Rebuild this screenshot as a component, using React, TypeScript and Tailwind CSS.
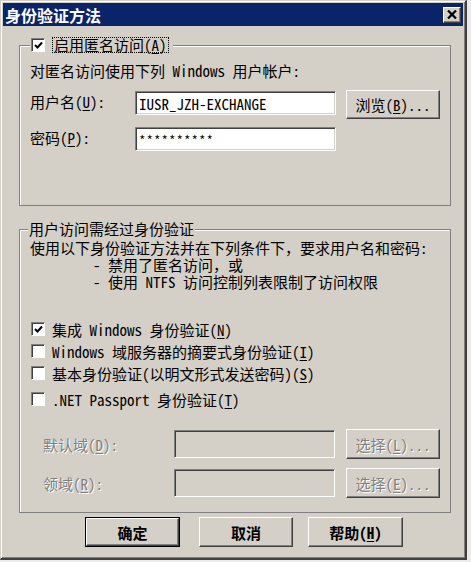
import React from "react";

const FONT = "font-['Noto_Sans_Mono_CJK_SC','Liberation_Mono','Noto_Sans_CJK_SC',monospace]";

function K({ c }: { c: string }) {
  return (
    <>
      (<span className="underline underline-offset-2">{c}</span>)
    </>
  );
}

function Check({ checked }: { checked?: boolean }) {
  return (
    <span className="w-[14px] h-[14px] shrink-0 bg-white border-t border-l border-r border-b border-t-[#808080] border-l-[#808080] border-r-white border-b-white shadow-[inset_1px_1px_0_#404040] flex items-center justify-center">
      {checked && (
        <svg width="9" height="9" viewBox="0 0 9 9">
          <path d="M1 4 L3.5 6.5 L8 1.5" stroke="#000" strokeWidth="2" fill="none" />
        </svg>
      )}
    </span>
  );
}

function Btn({
  children,
  w = "w-[94px]",
  h = "h-[29px]",
  disabled,
  extra = "",
}: {
  children: React.ReactNode;
  w?: string;
  h?: string;
  disabled?: boolean;
  extra?: string;
}) {
  return (
    <div
      className={`${w} ${h} shrink-0 flex items-center justify-center bg-[#d4d0c8] border-t border-l border-r border-b border-t-white border-l-white border-r-[#404040] border-b-[#404040] shadow-[inset_-1px_-1px_0_#808080] leading-[17px] ${
        disabled ? "text-[#808080] [text-shadow:1px_1px_0_#fff]" : "text-black"
      } ${extra}`}
    >
      {children}
    </div>
  );
}

function Input({
  children,
  w,
  h,
  disabled,
}: {
  children?: React.ReactNode;
  w: string;
  h: string;
  disabled?: boolean;
}) {
  return (
    <div
      className={`${w} ${h} shrink-0 flex items-center pl-[3px] border-t border-l border-r border-b border-t-[#808080] border-l-[#808080] border-r-white border-b-white shadow-[inset_1px_1px_0_#404040,inset_-1px_-1px_0_#d4d0c8] ${
        disabled ? "bg-[#d4d0c8]" : "bg-white"
      }`}
    >
      {children}
    </div>
  );
}

export default function App() {
  return (
    <div className={`w-[471px] h-[562px] bg-[#ecebe8] ${FONT} text-[15px] text-black`}>
      <div className="w-[467px] h-[560px] bg-[#d4d0c8] border-l border-t border-l-[#d4d0c8] border-t-[#d4d0c8] border-r-2 border-b-2 border-r-[#404040] border-b-[#404040] shadow-[inset_1px_1px_0_#fff,inset_-1px_-1px_0_#808080] p-[2px] flex flex-col">
        {/* title bar */}
        <div className="h-[23px] bg-[#0a246a] flex items-center justify-between pl-[2px] pr-[2px]">
          <span className="text-white font-bold text-[16px] leading-[20px] font-['Noto_Sans_CJK_SC',sans-serif]">
            身份验证方法
          </span>
          <div className="w-[18px] h-[16px] bg-[#d4d0c8] border-t border-l border-r border-b border-t-white border-l-white border-r-[#404040] border-b-[#404040] shadow-[inset_-1px_-1px_0_#808080] flex items-center justify-center">
            <svg width="10" height="9" viewBox="0 0 10 9">
              <path d="M1 0.5 L9 8.5 M9 0.5 L1 8.5" stroke="#000" strokeWidth="2.2" />
            </svg>
          </div>
        </div>

        {/* group 1 */}
        <fieldset className="mt-[11px] ml-[16px] w-[429px] border border-[#808080] shadow-[inset_1px_1px_0_#fff] px-[10px] pb-[54px] m-0">
          <legend className="h-[16px] flex items-center gap-[7px] pl-[1px] pr-[4px] bg-[#d4d0c8]">
            <Check checked />
            <span className="border border-dotted border-black leading-[14px] px-[1px]">
              启用匿名访问<K c="A" />
            </span>
          </legend>
          <div className="mt-[9px] leading-[17px]">对匿名访问使用下列 Windows 用户帐户:</div>
          <div className="mt-[11px] flex items-start">
            <div className="w-[105px] mt-[3px] leading-[17px]">
              用户名<K c="U" />:
            </div>
            <div className="mt-[1px]">
              <Input w="w-[201px]" h="h-[24px]">
                <span className="leading-[17px]">IUSR_JZH-EXCHANGE</span>
              </Input>
            </div>
            <div className="ml-[10px]">
              <Btn>
                浏览<K c="B" />...
              </Btn>
            </div>
          </div>
          <div className="mt-[8px] flex items-start">
            <div className="w-[105px] mt-[2px] leading-[17px]">
              密码<K c="P" />:
            </div>
            <Input w="w-[201px]" h="h-[24px]">
              <span className="leading-[17px] text-[13px] tracking-[1px]">**********</span>
            </Input>
          </div>
        </fieldset>

        {/* group 2 */}
        <fieldset className="mt-[15px] ml-[16px] w-[429px] border border-[#808080] shadow-[inset_1px_1px_0_#fff] px-[10px] pb-[14px] m-0">
          <legend className="h-[16px] flex items-center -ml-[2px] px-[1px] bg-[#d4d0c8] leading-[16px]">
            用户访问需经过身份验证
          </legend>
          <div className="mt-[2px] h-[17px] leading-[17px]">使用以下身份验证方法并在下列条件下，要求用户名和密码:</div>
          <div className="h-[17px] leading-[17px] pl-[63px]">- 禁用了匿名访问，或</div>
          <div className="h-[17px] leading-[17px] pl-[63px]">- 使用 NTFS 访问控制列表限制了访问权限</div>

          <div className="mt-[28px] h-[22px] flex items-center gap-[7px] pl-[1px]">
            <Check checked />
            <span className="leading-[17px]">
              集成 Windows 身份验证<K c="N" />
            </span>
          </div>
          <div className="h-[22px] flex items-center gap-[7px] pl-[1px]">
            <Check />
            <span className="leading-[17px]">
              Windows 域服务器的摘要式身份验证<K c="I" />
            </span>
          </div>
          <div className="h-[22px] flex items-center gap-[7px] pl-[1px]">
            <Check />
            <span className="leading-[17px]">
              基本身份验证(以明文形式发送密码)<K c="S" />
            </span>
          </div>
          <div className="mt-[4px] h-[22px] flex items-center gap-[7px] pl-[1px]">
            <Check />
            <span className="leading-[17px]">
              .NET Passport 身份验证<K c="T" />
            </span>
          </div>

          <div className="mt-[19px] h-[30px] flex items-center">
            <div className="ml-[13px] w-[131px] leading-[17px] text-[#808080] [text-shadow:1px_1px_0_#fff]">
              默认域<K c="D" />:
            </div>
            <Input w="w-[161px]" h="h-[28px]" disabled />
            <div className="ml-[11px]">
              <Btn h="h-[30px]" disabled>
                选择<K c="L" />...
              </Btn>
            </div>
          </div>
          <div className="mt-[9px] h-[30px] flex items-center">
            <div className="ml-[13px] w-[131px] leading-[17px] text-[#808080] [text-shadow:1px_1px_0_#fff]">
              领域<K c="R" />:
            </div>
            <Input w="w-[161px]" h="h-[28px]" disabled />
            <div className="ml-[11px]">
              <Btn h="h-[30px]" disabled>
                选择<K c="E" />...
              </Btn>
            </div>
          </div>
        </fieldset>

        {/* bottom buttons */}
        <div className="mt-[4px] flex items-start">
          <div className="ml-[82px] border border-black">
            <Btn w="w-[93px]" h="h-[28px]" extra="font-bold">
              确定
            </Btn>
          </div>
          <div className="ml-[19px]">
            <Btn w="w-[94px]" h="h-[30px]" extra="font-bold">
              取消
            </Btn>
          </div>
          <div className="ml-[15px]">
            <Btn w="w-[95px]" h="h-[30px]" extra="font-bold">
              帮助<K c="H" />
            </Btn>
          </div>
        </div>
      </div>
    </div>
  );
}
